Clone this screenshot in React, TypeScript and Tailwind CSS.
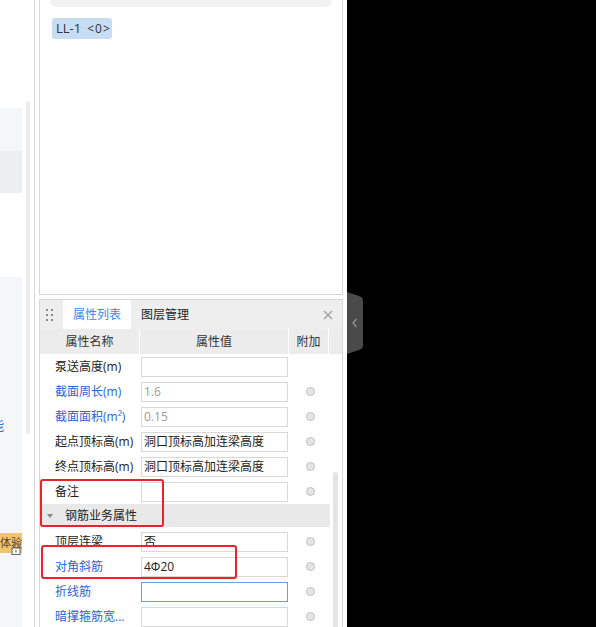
import React from 'react';

interface PropRow {
  label: string;
  value?: string;
  blue?: boolean;
  muted?: boolean;
  radio?: boolean;
  focused?: boolean;
}

const ROWS_TOP: PropRow[] = [
  { label: '泵送高度(m)' },
  { label: '截面周长(m)', value: '1.6', blue: true, muted: true, radio: true },
  { label: '截面面积(m²)', value: '0.15', blue: true, muted: true, radio: true },
  { label: '起点顶标高(m)', value: '洞口顶标高加连梁高度', radio: true },
  { label: '终点顶标高(m)', value: '洞口顶标高加连梁高度', radio: true },
  { label: '备注', radio: true },
];

const ROWS_BOTTOM: PropRow[] = [
  { label: '顶层连梁', value: '否', radio: true },
  { label: '对角斜筋', value: '4Φ20', blue: true, radio: true },
  { label: '折线筋', blue: true, radio: true, focused: true },
  { label: '暗撑箍筋宽...', blue: true, radio: true },
];

const Row: React.FC<{ row: PropRow }> = ({ row }) => (
  <div className="h-[25px] flex items-center">
    <div className={`w-[101px] pl-[15px] text-[12px] whitespace-nowrap ${row.blue ? 'text-[#2b63d8]' : 'text-[#222]'}`}>
      {row.label}
    </div>
    <div className="w-[149px]">
      <div
        className={`h-[20px] w-[147px] border flex items-center px-[2px] text-[12px] whitespace-nowrap ${
          row.focused ? 'border-[#6b9be2]' : 'border-[#d9d9d9]'
        } ${row.muted ? 'text-[#9a9a9a]' : 'text-[#222]'}`}
      >
        {row.value}
      </div>
    </div>
    <div className="w-[40px] flex justify-center">
      {row.radio && <span className="w-[9px] h-[9px] rounded-full border border-[#c2c2c2] bg-[#e4e4e4]" />}
    </div>
  </div>
);

const DragDots = () => (
  <div className="grid grid-cols-2 gap-x-[3px] gap-y-[3px]">
    {[0, 1, 2, 3, 4, 5].map(i => (
      <span key={i} className="w-[2px] h-[2px] bg-[#8a8a8a]" />
    ))}
  </div>
);

export default function App() {
  return (
    <div className="relative w-[596px] h-[627px] overflow-hidden bg-white flex font-['Open_Sans','Noto_Sans_CJK_SC',sans-serif]">
      {/* left sidebar remnant */}
      <div className="w-[22px] flex flex-col shrink-0">
        <div className="h-[108px]" />
        <div className="h-[43px] bg-[#f5f6f8]" />
        <div className="h-[42px] bg-[#eceef1]" />
        <div className="h-[84px]" />
        <div className="flex-1 bg-[#f5f6f8] flex flex-col">
          <div className="h-[140px]" />
          <div className="w-[4px] overflow-hidden">
            <span className="block -ml-[9px] text-[13px] leading-[16px] text-[#2b63d8]">能</span>
          </div>
          <div className="h-[100px]" />
          <div className="relative h-[20px] bg-[#f1c470] flex items-center justify-center">
            <span className="text-[11px] text-[#5a4520] whitespace-nowrap">体验</span>
          </div>
        </div>
      </div>
      <div className="w-[4px] shrink-0 ml-[4px]">
        <div className="mt-[101px] h-[333px] rounded-full bg-[#ececec]" />
      </div>
      <div className="w-px shrink-0 ml-[4px] bg-[#d9d9d9]" />
      <div className="w-[4px] shrink-0" />

      {/* main column */}
      <div className="w-[308px] shrink-0 flex flex-col">
        {/* upper panel */}
        <div className="h-[295px] w-[304px] border-l border-r border-b border-[#d6d6d6] shrink-0">
          <div className="ml-[10px] w-[282px] h-[7px] rounded-b-[10px] bg-[#f2f2f2]" />
          <div className="ml-[12px] mt-[11px] inline-flex h-[21px] w-[60px] items-center pl-[4px] rounded-[3px] bg-[#c6ddf4] text-[13px] text-[#333] whitespace-nowrap">
            <span>LL-1</span>
            <span className="ml-[6px] text-[12px] tracking-[1px]">&lt;0&gt;</span>
          </div>
        </div>
        <div className="h-[4px] shrink-0" />

        {/* lower panel */}
        <div className="flex-1 w-[304px] border-l border-r border-t border-[#d6d6d6] flex flex-col">
          <div className="h-[29px] bg-[#eeeeee] flex items-stretch pl-[6px]">
            <div className="flex items-center">
              <DragDots />
            </div>
            <div className="ml-[10px] w-[68px] bg-white flex items-center justify-center text-[12px] text-[#3a86ee]">
              属性列表
            </div>
            <div className="w-[68px] flex items-center justify-center text-[12px] text-[#222]">图层管理</div>
            <div className="ml-auto mr-[9px] flex items-center">
              <svg width="10" height="10" viewBox="0 0 10 10">
                <path d="M1 1 L9 9 M9 1 L1 9" stroke="#9a9a9a" strokeWidth="1.1" fill="none" />
              </svg>
            </div>
          </div>

          <div className="flex flex-1">
            <div className="w-[290px] flex flex-col">
              {/* table header */}
              <div className="h-[25px] flex bg-[#ececec] text-[12px] text-[#333]">
                <div className="w-[100px] flex items-center justify-center border-r border-white">属性名称</div>
                <div className="w-[149px] flex items-center justify-center border-r border-white">属性值</div>
                <div className="w-[40px] flex items-center justify-center border-r border-white">附加</div>
              </div>
              {ROWS_TOP.map(r => (
                <Row key={r.label} row={r} />
              ))}
              <div className="h-[25px]">
                <div className="h-[23px] bg-[#e9e9e9] flex items-center pl-[7px]">
                  <span className="w-0 h-0 border-x-[3px] border-t-[4px] border-x-transparent border-t-[#888]" />
                  <span className="ml-[12px] text-[12px] text-[#222]">钢筋业务属性</span>
                </div>
              </div>
              {ROWS_BOTTOM.map(r => (
                <Row key={r.label} row={r} />
              ))}
            </div>
            <div className="flex-1 flex flex-col">
              <div className="h-[25px] bg-[#ececec]" />
              <div className="ml-[3px] mt-[118px] w-[5px] flex-1 rounded-full bg-[#e4e4e4]" />
            </div>
          </div>
        </div>
      </div>

      {/* dark area with collapse handle */}
      <div className="flex-1 bg-black pt-[292px]">
        <svg width="16" height="62" viewBox="0 0 16 62">
          <path d="M0 0 L12 4 Q16 5 16 9 L16 53 Q16 57 12 58 L0 62 Z" fill="#4a4a4a" />
          <path d="M9.5 27 L6 31 L9.5 35" stroke="#9c9c9c" strokeWidth="1.2" fill="none" />
        </svg>
      </div>

      {/* lock icon over trial badge */}
      <div className="absolute left-[11px] top-[542px]">
        <svg width="10" height="13" viewBox="0 0 10 13">
          <path d="M2.5 6 V4 a2.5 2.5 0 0 1 5 0 V6" stroke="#6b6b6b" strokeWidth="1.1" fill="none" />
          <rect x="1" y="6" width="8" height="6.5" fill="#fff" stroke="#6b6b6b" strokeWidth="1.1" />
          <rect x="4.4" y="8" width="1.2" height="2.5" fill="#6b6b6b" />
        </svg>
      </div>

      {/* red annotation boxes */}
      <div className="absolute left-[40px] top-[479px] w-[124px] h-[48px] border-2 border-[#e8232b] rounded-[3px]" />
      <div className="absolute left-[41px] top-[545px] w-[196px] h-[34px] border-2 border-[#e8232b] rounded-[3px]" />
    </div>
  );
}
